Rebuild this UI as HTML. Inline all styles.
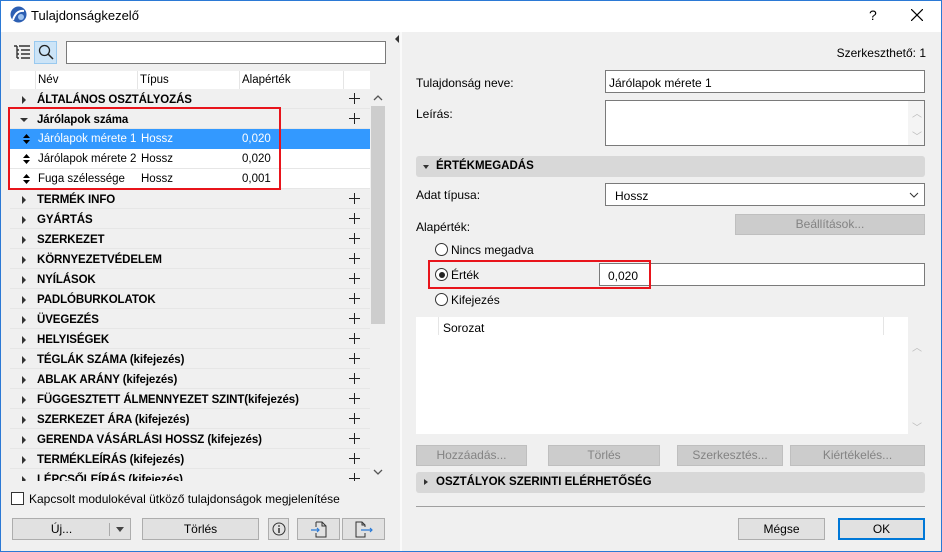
<!DOCTYPE html>
<html><head><meta charset="utf-8"><style>
*{box-sizing:border-box;margin:0;padding:0}
body{width:942px;height:552px;overflow:hidden;background:#f0f0f0;font-family:"Liberation Sans",sans-serif;font-size:12px;color:#000;position:relative}
.a{position:absolute}
.win{position:absolute;left:0;top:0;width:942px;height:552px;border:1px solid #2b79d5;pointer-events:none}
.row{position:absolute;left:10px;width:360px;height:20px;border-bottom:1px solid #e6e6e6;line-height:20px;white-space:nowrap}
.row b{position:absolute;left:27px;top:1px;font-size:11.5px;letter-spacing:-.1px}
.row span{font-size:11.5px}
.tri{position:absolute;left:12px;top:7px;width:0;height:0;border-left:4px solid #333;border-top:4px solid transparent;border-bottom:4px solid transparent}
.plus{position:absolute;left:339px;top:4px;width:11px;height:11px}
.plus:before{content:"";position:absolute;left:5px;top:0;width:1px;height:11px;background:#222}
.plus:after{content:"";position:absolute;left:0;top:5px;width:11px;height:1px;background:#222}
.btn{position:absolute;background:#e1e1e1;border:1px solid #adadad;text-align:center;line-height:20px}
.dis{position:absolute;background:#cccccc;border:1px solid #bfbfbf;color:#838383;text-align:center;line-height:19px}
.inp{position:absolute;background:#fff;border:1px solid #7a7a7a}
.hdr{position:absolute;left:416px;width:509px;height:21px;background:#d8d8d8;border-radius:3px;line-height:21px;font-weight:bold;font-size:11.5px}
.radio{position:absolute;width:13px;height:13px;border:1px solid #333;border-radius:50%;background:#fff}
.upd{position:absolute;font-size:10px;color:#bbb}
.ud{position:absolute;left:13px;top:5px}
</style></head><body>
<div class="a" style="left:0;top:0;width:942px;height:32px;background:#fff"></div>
<svg class="a" style="left:10px;top:6px" width="17" height="17"><circle cx="8.5" cy="8.5" r="8" fill="#2c5fb3"/><path d="M3 14 Q6 4 14 5" stroke="#fff" stroke-width="2" fill="none"/><circle cx="11" cy="11" r="3" fill="#9ec3f0"/></svg>
<div class="a" style="left:31px;top:8px;font-size:13px">Tulajdonságkezelő</div>
<div class="a" style="left:869px;top:7px;font-size:14px">?</div>
<svg class="a" style="left:911px;top:9px" width="12" height="12"><path d="M0 0L12 12M12 0L0 12" stroke="#000" stroke-width="1.2"/></svg>

<svg class="a" style="left:14px;top:45px" width="17" height="14"><path d="M0 1h3M5 1h11M3 5h2M7 5h9M3 9h2M7 9h9M3 13h2M7 13h9M3 1v12" stroke="#333" stroke-width="1.4"/></svg>
<div class="a" style="left:34px;top:41px;width:23px;height:23px;background:#cce4f7;border:1px solid #99c9ef"></div>
<svg class="a" style="left:38px;top:44px" width="16" height="16"><circle cx="6.5" cy="6.5" r="5" stroke="#222" stroke-width="1.3" fill="none"/><path d="M10 10L15 15" stroke="#222" stroke-width="1.5"/></svg>
<div class="inp" style="left:66px;top:41px;width:320px;height:23px"></div>

<div class="a" style="left:10px;top:71px;width:360px;height:18px;background:#fff"></div>
<div class="a" style="left:35px;top:71px;width:1px;height:18px;background:#e5e5e5"></div>
<div class="a" style="left:137px;top:71px;width:1px;height:18px;background:#e5e5e5"></div>
<div class="a" style="left:239px;top:71px;width:1px;height:18px;background:#e5e5e5"></div>
<div class="a" style="left:343px;top:71px;width:1px;height:18px;background:#e5e5e5"></div>
<div class="a" style="left:38px;top:74px;font-size:11.5px">Név</div>
<div class="a" style="left:140px;top:74px;font-size:11.5px">Típus</div>
<div class="a" style="left:242px;top:74px;font-size:11.5px">Alapérték</div>

<div class="row" style="top:89px"><i class="tri"></i><b>ÁLTALÁNOS OSZTÁLYOZÁS</b><i class="plus"></i></div>
<div class="row" style="top:109px"><i class="tri" style="left:10px;top:9px;border-left:4px solid transparent;border-right:4px solid transparent;border-top:4px solid #333;border-bottom:0"></i><b>Járólapok száma</b><i class="plus"></i></div>
<div class="row" style="top:129px;background:#3399ff;color:#fff;border:0"><svg class="ud" width="7" height="10"><path d="M0 4L3.5 0L7 4ZM0 6L3.5 10L7 6Z" fill="#000"/></svg><span style="position:absolute;left:28px">Járólapok mérete 1</span><span style="position:absolute;left:131px">Hossz</span><span style="position:absolute;left:232px">0,020</span></div>
<div class="row" style="top:149px;background:#fff"><svg class="ud" width="7" height="10"><path d="M0 4L3.5 0L7 4ZM0 6L3.5 10L7 6Z" fill="#000"/></svg><span style="position:absolute;left:28px">Járólapok mérete 2</span><span style="position:absolute;left:131px">Hossz</span><span style="position:absolute;left:232px">0,020</span></div>
<div class="row" style="top:169px;background:#fff"><svg class="ud" width="7" height="10"><path d="M0 4L3.5 0L7 4ZM0 6L3.5 10L7 6Z" fill="#000"/></svg><span style="position:absolute;left:28px">Fuga szélessége</span><span style="position:absolute;left:131px">Hossz</span><span style="position:absolute;left:232px">0,001</span></div>
<div class="row" style="top:189px"><i class="tri"></i><b>TERMÉK INFO</b><i class="plus"></i></div>
<div class="row" style="top:209px"><i class="tri"></i><b>GYÁRTÁS</b><i class="plus"></i></div>
<div class="row" style="top:229px"><i class="tri"></i><b>SZERKEZET</b><i class="plus"></i></div>
<div class="row" style="top:249px"><i class="tri"></i><b>KÖRNYEZETVÉDELEM</b><i class="plus"></i></div>
<div class="row" style="top:269px"><i class="tri"></i><b>NYÍLÁSOK</b><i class="plus"></i></div>
<div class="row" style="top:289px"><i class="tri"></i><b>PADLÓBURKOLATOK</b><i class="plus"></i></div>
<div class="row" style="top:309px"><i class="tri"></i><b>ÜVEGEZÉS</b><i class="plus"></i></div>
<div class="row" style="top:329px"><i class="tri"></i><b>HELYISÉGEK</b><i class="plus"></i></div>
<div class="row" style="top:349px"><i class="tri"></i><b>TÉGLÁK SZÁMA (kifejezés)</b><i class="plus"></i></div>
<div class="row" style="top:369px"><i class="tri"></i><b>ABLAK ARÁNY (kifejezés)</b><i class="plus"></i></div>
<div class="row" style="top:389px"><i class="tri"></i><b>FÜGGESZTETT ÁLMENNYEZET SZINT(kifejezés)</b><i class="plus"></i></div>
<div class="row" style="top:409px"><i class="tri"></i><b>SZERKEZET ÁRA (kifejezés)</b><i class="plus"></i></div>
<div class="row" style="top:429px"><i class="tri"></i><b>GERENDA VÁSÁRLÁSI HOSSZ (kifejezés)</b><i class="plus"></i></div>
<div class="row" style="top:449px"><i class="tri"></i><b>TERMÉKLEÍRÁS (kifejezés)</b><i class="plus"></i></div>
<div class="a" style="left:10px;top:469px;width:360px;height:12px;overflow:hidden"><div class="row" style="top:0;left:0"><i class="tri"></i><b>LÉPCSŐLEÍRÁS (kifejezés)</b><i class="plus"></i></div></div>
<svg class="a" style="left:373px;top:94px" width="10" height="8"><path d="M1 6L5 2L9 6" stroke="#555" stroke-width="1.3" fill="none"/></svg>
<div class="a" style="left:371px;top:106px;width:14px;height:218px;background:#cdcdcd"></div>
<svg class="a" style="left:373px;top:468px" width="10" height="8"><path d="M1 2L5 6L9 2" stroke="#555" stroke-width="1.3" fill="none"/></svg>
<div class="a" style="left:8px;top:107px;width:273px;height:83px;border:2px solid #e8141b"></div>

<div class="a" style="left:11px;top:492px;width:13px;height:13px;border:1px solid #333;background:#fff"></div>
<div class="a" style="left:29px;top:492px">Kapcsolt modulokéval ütköző tulajdonságok megjelenítése</div>

<div class="btn" style="left:12px;top:518px;width:119px;height:22px"><span style="position:absolute;left:0;width:97px">Új...</span><i class="a" style="left:96px;top:4px;width:1px;height:13px;background:#aaa"></i><i class="a" style="left:103px;top:8px;border-left:4px solid transparent;border-right:4px solid transparent;border-top:5px solid #444"></i></div>
<div class="btn" style="left:142px;top:518px;width:117px;height:22px">Törlés</div>
<div class="btn" style="left:268px;top:518px;width:21px;height:22px"><svg style="margin-top:3px" width="14" height="14"><circle cx="7" cy="7" r="6" stroke="#333" fill="none"/><path d="M7 6v5" stroke="#333" stroke-width="1.5"/><circle cx="7" cy="4" r=".9" fill="#333"/></svg></div>
<div class="btn" style="left:297px;top:518px;width:43px;height:22px"><svg style="margin-top:2px" width="18" height="17"><path d="M6 1h6l4 4v11H6v-4M6 6V1M12 1v4h4" stroke="#333" fill="none"/><path d="M1 9h8M7 7l2 2l-2 2" stroke="#2a7ad6" stroke-width="1.2" fill="none"/></svg></div>
<div class="btn" style="left:342px;top:518px;width:43px;height:22px"><svg style="margin-top:2px" width="20" height="17"><path d="M11 12v4H2V1h6l3 3v2M8 1v3h3" stroke="#333" fill="none"/><path d="M7 9h11M16 7l2 2l-2 2" stroke="#2a7ad6" stroke-width="1.2" fill="none"/></svg></div>

<div class="a" style="left:393px;top:32px;width:8px;height:520px;background:#f0f0f0"></div>
<div class="a" style="left:400px;top:32px;width:2px;height:520px;background:#fafafa"></div>
<i class="a" style="left:395px;top:35px;border-right:4px solid #333;border-top:4px solid transparent;border-bottom:4px solid transparent"></i>

<div class="a" style="right:16px;top:46px">Szerkeszthető: 1</div>
<div class="a" style="left:416px;top:76px">Tulajdonság neve:</div>
<div class="inp" style="left:605px;top:70px;width:320px;height:23px;padding:5px 3px">Járólapok mérete 1</div>
<div class="a" style="left:416px;top:107px">Leírás:</div>
<div class="inp" style="left:605px;top:100px;width:320px;height:46px"><div class="a" style="right:0;top:0;width:16px;height:44px;background:#f4f4f4"></div><span class="upd" style="left:306px;top:4px">︿</span><span class="upd" style="left:306px;top:27px">﹀</span></div>

<div class="hdr" style="top:156px"><i class="a" style="left:7px;top:9px;border-left:3.5px solid transparent;border-right:3.5px solid transparent;border-top:4px solid #333"></i><span style="position:absolute;left:20px">ÉRTÉKMEGADÁS</span></div>
<div class="a" style="left:416px;top:188px">Adat típusa:</div>
<div class="inp" style="left:605px;top:183px;width:320px;height:23px;padding:5px 9px">Hossz<svg class="a" style="right:5px;top:8px" width="10" height="7"><path d="M1 1l4 4l4-4" stroke="#333" fill="none"/></svg></div>
<div class="a" style="left:416px;top:220px">Alapérték:</div>
<div class="dis" style="left:735px;top:214px;width:190px;height:21px">Beállítások...</div>
<div class="radio" style="left:435px;top:243px"></div><div class="a" style="left:451px;top:243px">Nincs megadva</div>
<div class="radio" style="left:435px;top:268px"><i class="a" style="left:2.5px;top:2.5px;width:6px;height:6px;border-radius:50%;background:#222"></i></div><div class="a" style="left:451px;top:268px">Érték</div>
<div class="inp" style="left:599px;top:263px;width:326px;height:23px;padding:5px 8px">0,020</div>
<div class="a" style="left:428px;top:260px;width:223px;height:29px;border:2px solid #e8141b"></div>
<div class="radio" style="left:435px;top:293px"></div><div class="a" style="left:451px;top:293px">Kifejezés</div>

<div class="a" style="left:416px;top:317px;width:492px;height:117px;background:#fff"></div>
<div class="a" style="left:438px;top:317px;width:1px;height:18px;background:#e5e5e5"></div>
<div class="a" style="left:883px;top:317px;width:1px;height:18px;background:#e5e5e5"></div>
<div class="a" style="left:443px;top:321px">Sorozat</div>
<span class="upd" style="left:912px;top:339px">︿</span><span class="upd" style="left:912px;top:419px">﹀</span>

<div class="dis" style="left:416px;top:445px;width:111px;height:21px">Hozzáadás...</div>
<div class="dis" style="left:548px;top:445px;width:112px;height:21px">Törlés</div>
<div class="dis" style="left:677px;top:445px;width:106px;height:21px">Szerkesztés...</div>
<div class="dis" style="left:790px;top:445px;width:135px;height:21px">Kiértékelés...</div>

<div class="hdr" style="top:472px"><i class="a" style="left:8px;top:7px;border-left:4px solid #333;border-top:3.5px solid transparent;border-bottom:3.5px solid transparent"></i><span style="position:absolute;left:20px">OSZTÁLYOK SZERINTI ELÉRHETŐSÉG</span></div>
<div class="a" style="left:416px;top:506px;width:509px;height:1px;background:#a0a0a0"></div>
<div class="btn" style="left:738px;top:518px;width:87px;height:22px">Mégse</div>
<div class="btn" style="left:838px;top:518px;width:87px;height:22px;border:2px solid #0078d7;line-height:18px">OK</div>

<div class="win"></div>
</body></html>
